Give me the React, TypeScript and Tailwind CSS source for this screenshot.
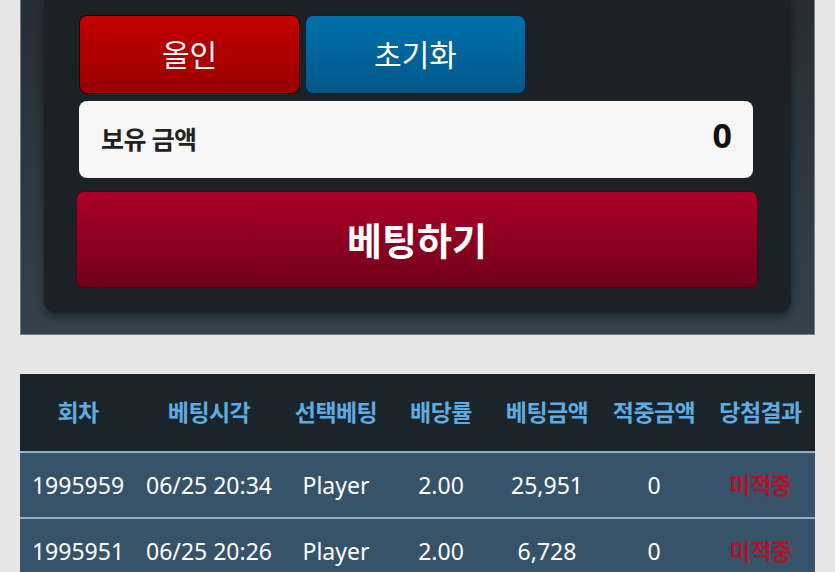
import React from 'react';

const KR = { fontFamily: '"Noto Sans", "Noto Sans CJK KR", sans-serif' };

const rows = [
  { round: '1995959', time: '06/25 20:34', pick: 'Player', odds: '2.00', bet: '25,951', win: '0', result: '미적중' },
  { round: '1995951', time: '06/25 20:26', pick: 'Player', odds: '2.00', bet: '6,728', win: '0', result: '미적중' },
];

const headers = ['회차', '베팅시각', '선택베팅', '배당률', '베팅금액', '적중금액', '당첨결과'];

const cols = 'grid grid-cols-[116px_146px_108px_102px_110px_104px_109px]';

export default function App() {
  return (
    <div className="min-h-[572px] bg-[#e6e6e6] px-5" style={KR}>
      {/* 베팅 패널 */}
      <div className="bg-gradient-to-b from-[#262e34] to-[#34424c] border-x border-b border-[#6f7f8b] pb-[21px]">
        <div className="mx-[23px] bg-[#1c2125] rounded-b-xl shadow-[0_4px_8px_rgba(0,0,0,0.45)] pl-[35px] pr-[38px] pt-[15px] pb-[25px]">
          <div className="flex gap-[5px]">
            <button className="w-[221px] h-[79px] rounded-lg border border-[#2a0000] bg-gradient-to-b from-[#c40000] to-[#980000] text-white text-[30px] leading-none">
              올인
            </button>
            <button className="w-[221px] h-[79px] rounded-lg border border-[#06223a] bg-gradient-to-b from-[#0071aa] to-[#00578a] text-white text-[30px] leading-none">
              초기화
            </button>
          </div>

          <div className="mt-[7px] h-[77px] rounded-lg bg-[#f7f7f7] flex items-center justify-between pl-[22px] pr-[21px]">
            <span className="text-[25px] font-bold text-[#222] tracking-tight">보유 금액</span>
            <span className="text-[34px] font-bold text-[#111] -mt-2">0</span>
          </div>

          <button className="mt-[13px] -ml-[3px] w-[calc(100%+8px)] h-[97px] rounded-lg border border-[#55000f] bg-gradient-to-b from-[#ad0029] to-[#70001a] text-white text-[38px] font-bold leading-none">
            베팅하기
          </button>
        </div>
      </div>

      {/* 베팅 내역 */}
      <div className="mt-[39px]">
        <div className={`${cols} h-[77px] bg-[#1b232b] items-center text-center text-[23px] font-bold text-[#5eace0] tracking-tight`}>
          {headers.map((h) => (
            <div key={h}>{h}</div>
          ))}
        </div>
        {rows.map((r) => (
          <div key={r.round} className={`${cols} h-[66px] bg-[#36536a] border-t-2 border-[#8db3cc] items-center text-center text-[23px] text-white`}>
            <div>{r.round}</div>
            <div>{r.time}</div>
            <div>{r.pick}</div>
            <div>{r.odds}</div>
            <div>{r.bet}</div>
            <div>{r.win}</div>
            <div className="text-[23px] font-bold text-[#b0142a] tracking-tight">{r.result}</div>
          </div>
        ))}
      </div>
    </div>
  );
}
